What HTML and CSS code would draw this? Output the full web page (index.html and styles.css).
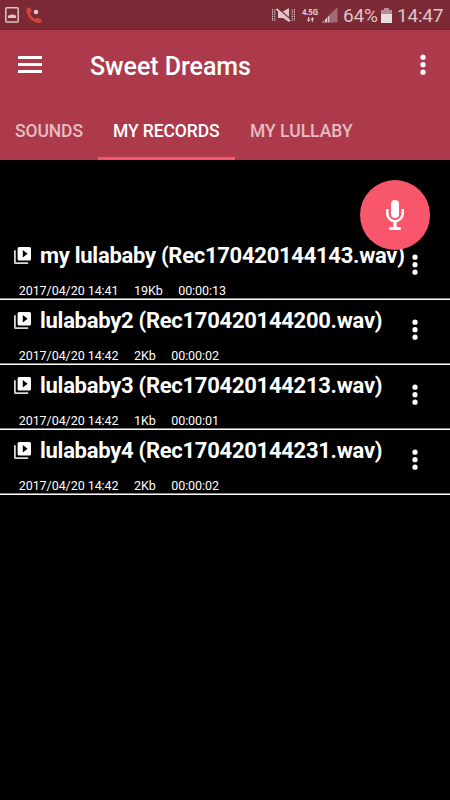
FILE: index.html
```html
<!DOCTYPE html>
<html lang="en">
<head>
<meta charset="utf-8">
<title>Sweet Dreams</title>
<link rel="stylesheet" href="styles.css">
</head>
<body>
<svg class="defs" width="0" height="0" aria-hidden="true">
  <symbol id="dots" viewBox="0 0 6 22"><circle cx="3" cy="3.2" r="2.6"/><circle cx="3" cy="10.7" r="2.6"/><circle cx="3" cy="18.200" r="2.6"/></symbol>
  <symbol id="library" viewBox="0 0 18 18"><path d="M0 3.300h1.800v11.900h12.400V17H1.600Q0 17 0 15.400Z" opacity=".85"/><path fill-rule="evenodd" d="M5.200 0H15.500Q17 0 17 1.500V12Q17 13.500 15.500 13.500H5.200Q3.600 13.500 3.600 12V1.500Q3.600 0 5.200 0ZM8.800 3V10.400L13.600 6.700Z"/></symbol>
</svg>
<div class="status">
  <svg class="gallery" viewBox="0 0 14 16"><rect x=".8" y=".8" width="12.400" height="14.200" rx="1" fill="none" stroke="currentColor" stroke-width="1.500"/><path d="M3 11V9l2-1.500 1 .8L7.500 7 9 8.300l1-.6 1 1.300v2Z" fill="currentColor"/></svg>
  <svg class="call" viewBox="0 0 16 17"><path d="M1.200 1.200 3.500.2Q4.300 0 4.600.8L5.600 4Q5.800 4.800 5.200 5.200L4 6.400Q5.600 10 9.400 12L10.800 11Q11.400 10.500 12 10.800L15.200 12.200Q16 12.600 15.700 13.400L14.800 15.200Q14 16.300 12.600 16C6 15.200.6 9.500.4 3Q.4 1.700 1.200 1.200Z" fill="#cf4339"/><circle cx="10" cy="5" r="2.300" fill="#dfc4c8"/></svg>
  <svg class="mute" viewBox="0 0 23 16"><path d="M6 4.500h5L17 1v14l-6-4H6Z" fill="currentColor"/><path d="M5.500 1 19 12.500" stroke="#7b2935" stroke-width="1.300"/><path d="M4.500 2 18 14" stroke="currentColor" stroke-width="1.800"/><path d="M3.200 2.500 2.200 4.500l1 2-1 2 1 2-1 2 1 1.500M.6 2v12M19.800 2.500l1 2-1 2 1 2-1 2 1 2-1 1.500M22.400 2v12" stroke="currentColor" fill="none" stroke-dasharray="1.600 .7"/></svg>
  <div class="network"><span>4.5G</span><svg viewBox="0 0 10 6"><path d="M2.700 6 .4 3H2V0h1.500v3H5ZM7.300 0l2.300 3H8v3H6.500V3H5Z" fill="currentColor"/></svg></div>
  <svg class="signal" viewBox="0 0 16 16"><path d="M7.500 7.800 15.500 0v15.500h-8Z" fill="#a46972"/><path d="M0 15.500 2.300 13.200v2.300ZM3 12.500 5 10.500v5H3ZM5.600 9.900 7.500 8v7.500H5.600Z" fill="currentColor"/></svg>
  <span class="percent">64%</span>
  <svg class="battery" viewBox="0 0 11 15"><path d="M3 0h5v2h3v13H0V2h3Z" fill="#b98a91"/><path d="M0 6h11v9H0Z" fill="#eadde0"/></svg>
  <span class="clock">14:47</span>
</div>
<header class="header">
  <div class="appbar">
    <div class="menu"><i></i><i></i><i></i></div>
    <h1>Sweet Dreams</h1>
    <svg class="dots"><use href="#dots"/></svg>
  </div>
  <nav class="tabs">
    <span class="sounds">SOUNDS</span>
    <span class="records active">MY RECORDS</span>
    <span class="lullaby">MY LULLABY</span>
  </nav>
</header>
<main class="list">
  <article class="row">
    <svg class="library"><use href="#library"/></svg>
    <div class="info"><h2>my lulababy (Rec170420144143.wav)</h2><p><span>2017/04/20 14:41</span><span>19Kb</span><span>00:00:13</span></p></div>
    <svg class="dots"><use href="#dots"/></svg>
  </article>
  <article class="row">
    <svg class="library"><use href="#library"/></svg>
    <div class="info"><h2>lulababy2 (Rec170420144200.wav)</h2><p><span>2017/04/20 14:42</span><span>2Kb</span><span>00:00:02</span></p></div>
    <svg class="dots"><use href="#dots"/></svg>
  </article>
  <article class="row">
    <svg class="library"><use href="#library"/></svg>
    <div class="info"><h2>lulababy3 (Rec170420144213.wav)</h2><p><span>2017/04/20 14:42</span><span>1Kb</span><span>00:00:01</span></p></div>
    <svg class="dots"><use href="#dots"/></svg>
  </article>
  <article class="row">
    <svg class="library"><use href="#library"/></svg>
    <div class="info"><h2>lulababy4 (Rec170420144231.wav)</h2><p><span>2017/04/20 14:42</span><span>2Kb</span><span>00:00:02</span></p></div>
    <svg class="dots"><use href="#dots"/></svg>
  </article>
</main>
<div class="fab">
  <svg viewBox="0 0 18 30"><rect x="5" y="0" width="8" height="18" rx="4" fill="#fff"/><path d="M1.300 9v4.500a7.700 7.700 0 0 0 15.400 0V9" fill="none" stroke="#fff" stroke-width="2.500"/><path d="M7.300 20.500h3.400V27H14q1 0 1 1.500 0 1.500-1 1.500H4q-1 0-1-1.500Q3 27 4 27h3.300Z" fill="#fff"/></svg>
</div>
</body>
</html>
```
FILE: styles.css
```css
* { box-sizing: border-box; }
body {
  margin: 0;
  width: 450px;
  height: 800px;
  overflow: hidden;
  position: relative;
  background: #000;
  color: #fff;
  font-family: Roboto, sans-serif;
}
h1, h2, p { margin: 0; }
svg { display: block; flex: none; }
.defs { position: absolute; }
.status {
  display: flex;
  height: 30px;
  padding-left: 5px;
  background: #7b2935;
  border-bottom: 1px solid #6d2430;
  color: #dfc4c8;
  line-height: 31px;
  white-space: nowrap;
}
.gallery { width: 14px; height: 16px; margin-top: 7px; }
.call { width: 16px; height: 17px; margin: 7px 0 0 7px; }
.mute { width: 23px; height: 16px; margin: 7px 0 0 230px; }
.network {
  width: 17px;
  margin: 8px 0 0 7px;
  font-family: "Open Sans", sans-serif;
  font-size: 8px;
  font-weight: 700;
  line-height: 8px;
  letter-spacing: -0.3px;
}
.network span { display: block; }
.network svg { width: 9px; height: 5px; margin: 1px 0 0 4px; }
.signal { width: 16px; height: 16px; margin: 7px 0 0 3px; }
.percent { width: 38px; margin-left: 5px; font-size: 19px; letter-spacing: -0.2px; }
.battery { width: 11px; height: 15px; margin-top: 8px; }
.clock { margin-left: 5px; font-size: 19px; letter-spacing: -0.2px; }
.header { height: 130px; background: #ad3a4a; }
.appbar { display: flex; height: 72px; padding-left: 18px; }
.menu {
  display: flex;
  flex-direction: column;
  gap: 4px;
  width: 24px;
  margin-top: 26px;
}
.menu i { height: 3px; background: #fff; }
.appbar h1 {
  width: 330px;
  margin-left: 48px;
  font-size: 25px;
  font-weight: 500;
  line-height: 74px;
  letter-spacing: -0.05px;
}
.dots { width: 6px; height: 22px; fill: #fff; }
.appbar .dots { margin: 24px 0 0 -0.5px; }
.tabs {
  display: flex;
  height: 58px;
  font-size: 17.5px;
  font-weight: 500;
  line-height: 58px;
  white-space: nowrap;
  color: #e6bcc2;
}
.tabs span { padding-left: 15px; height: 58px; }
.sounds { width: 98px; letter-spacing: -0.1px; }
.records { width: 137px; letter-spacing: -0.1px; }
.tabs .active { color: #fff; border-bottom: 3px solid #fa566b; }
.list { padding-top: 75px; }
.row {
  display: flex;
  height: 65px;
  padding-left: 14px;
  border-bottom: 1px solid #fff;
  box-shadow: inset 0 -1px #858585;
}
.library { width: 18px; height: 18px; margin-top: 12px; fill: #fff; }
.info { width: 380px; padding-left: 8px; }
.info h2 {
  height: 42px;
  font-size: 22px;
  font-weight: 700;
  line-height: 41px;
  letter-spacing: -0.28px;
  white-space: nowrap;
}
.info p {
  display: flex;
  gap: 15.5px;
  margin-left: -21.3px;
  font-size: 12.5px;
  line-height: 27px;
  letter-spacing: -0.06px;
  white-space: nowrap;
}
.row .dots { margin: 19px 0 0 0; }
.fab {
  position: absolute;
  left: 360px;
  top: 180px;
  display: flex;
  justify-content: center;
  width: 70px;
  height: 70px;
  padding-top: 20px;
  border-radius: 50%;
  background: #f7566b;
}
.fab svg { width: 18px; height: 30px; }
```
